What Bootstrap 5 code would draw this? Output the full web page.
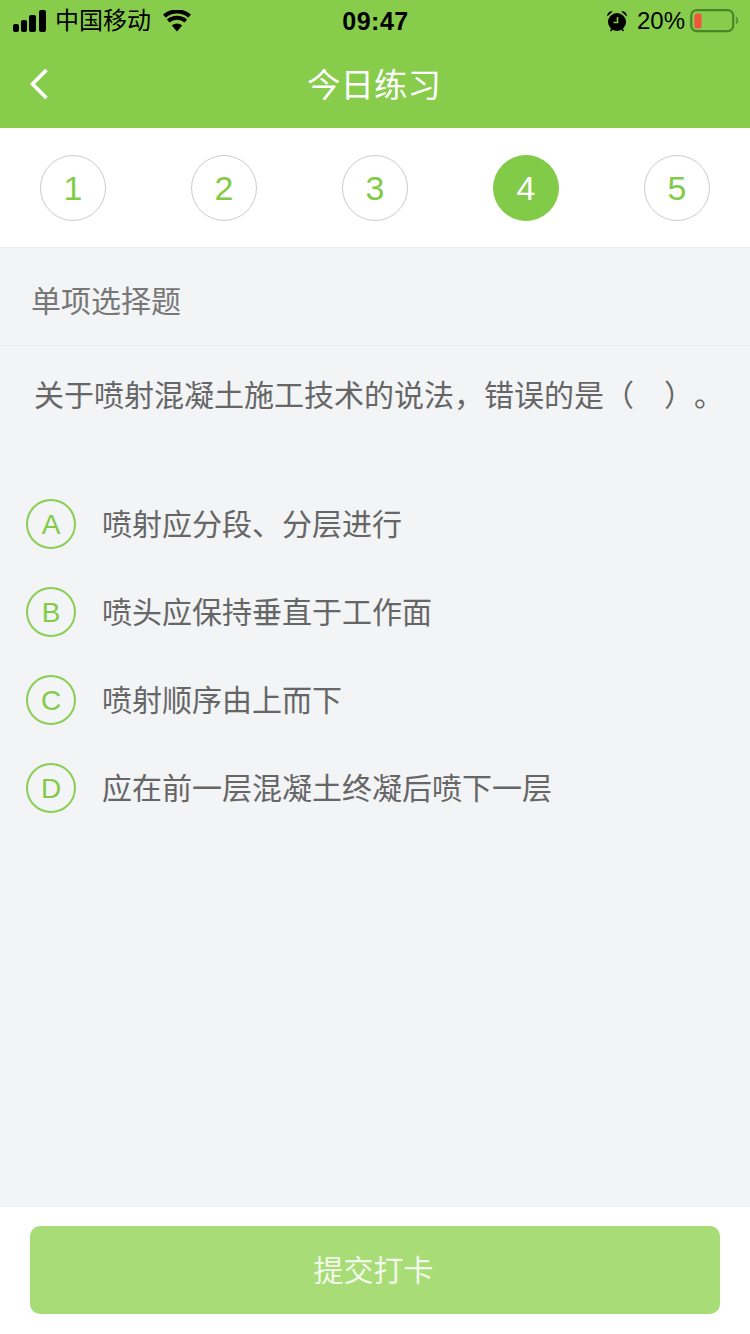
<!DOCTYPE html>
<html lang="zh">
<head>
    <meta charset="UTF-8">
    <title>今日练习</title>
    <meta name="viewport" content="width=device-width, initial-scale=1">
    <link href="https://cdn.jsdelivr.net/npm/bootstrap@5.3.0/dist/css/bootstrap.min.css" rel="stylesheet">
    <style>
        html, body { height: 100%; }
        body {
            width: 750px;
            height: 1334px;
            overflow: hidden;
            background: #f2f4f6;
            font-family: "Liberation Sans", "Noto Sans CJK SC", sans-serif;
            text-spacing-trim: space-all;
        }
        .screen { height: 1334px; }
        .app-head { background: #87cd4b; height: 128px; }
        .status-row { height: 42px; padding: 0 12px 0 13px; color: #000; font-size: 24px; line-height: 42px; }
        .status-left, .status-right { width: 300px; }
        .status-time { font-size: 25px; font-weight: 700; letter-spacing: .5px; }
        .carrier { margin-left: 9px; margin-right: 11px; }
        .pct { margin-left: 10px; margin-right: 5px; }
        .title-row { height: 86px; }
        .head-title { color: #fff; font-size: 33.500px; line-height: 87px; padding-right: 2px; }
        .back-btn { left: 29px; top: 68px; }
        .steps { background: #fff; height: 120px; padding: 27px 40px 0; border-bottom: 1px solid #e9ebed; }
        .step-dot {
            width: 66px; height: 66px;
            border: 1px solid #c9cccf;
            color: #82cb48;
            font-size: 34px;
        }
        .step-dot.on { background: #82cb48; border-color: #82cb48; color: #fff; }
        .q-type { height: 98px; padding-left: 31px; color: #777; font-size: 30px; line-height: 108px; border-bottom: 1px solid #e9ebed; }
        .q-text { padding: 29px 0 0 34px; height: 120px; color: #666; font-size: 30px; line-height: 42px; white-space: nowrap; }
        .opt-list { padding-left: 26px; gap: 38px; margin-top: 33px; }
        .opt-row { height: 50px; color: #666; font-size: 30px; }
        .opt-mark {
            width: 50px; height: 50px;
            padding-top: 2px;
            border: 2px solid #8ace55;
            color: #82cb48;
            font-size: 28px;
            margin-right: 26px;
        }
        .foot-bar { height: 128px; background: #fff; border-top: 1px solid #e9ebed; padding: 19px 30px 0; }
        .submit-btn {
            width: 690px; height: 88px;
            padding-right: 15px;
            background: #a8dc76;
            border: 0;
            border-radius: 10px;
            color: #f2f8ea;
            font-size: 30px;
        }
    </style>
</head>
<body>
    <div class="screen d-flex flex-column">
        <div class="app-head position-relative flex-shrink-0">
            <div class="status-row d-flex justify-content-between align-items-center">
                <div class="status-left d-flex align-items-center">
                    <svg width="33" height="23" viewBox="0 0 33 23"><rect x="0" y="14" width="6" height="8" rx="2"/><rect x="8" y="10" width="6" height="12" rx="2"/><rect x="16" y="5" width="7" height="17" rx="2"/><rect x="26" y="0" width="7" height="22" rx="2"/></svg>
                    <span class="carrier">中国移动</span>
                    <svg width="30" height="22" viewBox="0 0 30 22"><path d="M15 21.500l-5.200-6a7.600 7.600 0 0 1 10.400 0z"/><path d="M7.400 12.500a11.500 11.500 0 0 1 15.200 0l2.500-3a15.500 15.500 0 0 0-20.200 0z"/><path d="M3.800 8.300a17 17 0 0 1 22.400 0l2.800-3.300a21.500 21.500 0 0 0-28 0z" transform="translate(0 -.500)"/></svg>
                </div>
                <div class="status-time">09:47</div>
                <div class="status-right d-flex align-items-center justify-content-end">
                    <svg width="20" height="21" viewBox="1 1 20 21"><circle cx="11" cy="12" r="9"/><path d="M1.200 6.500a4.500 4.500 0 0 1 5.500-5zM20.800 6.500a4.500 4.500 0 0 0-5.500-5z"/><path d="M4.500 21l2-2.500M17.500 21l-2-2.500" stroke="#000" stroke-width="1.500"/><path d="M11.500 7v5.500H7.500" fill="none" stroke="#87cd4b" stroke-width="1.600"/></svg>
                    <span class="pct">20%</span>
                    <svg width="48" height="24" viewBox="0 0 48 24"><rect x="1.200" y="1.200" width="42" height="21" rx="5.500" fill="none" stroke="#4a8529" stroke-width="2.200"/><rect x="4.500" y="4.500" width="7" height="15" rx="2.500" fill="#f5533d"/><path d="M46 8.500a4 4 0 0 1 0 6" fill="none" stroke="#4a8529" stroke-width="1.500"/></svg>
                </div>
            </div>
            <div class="title-row text-center">
                <div class="head-title">今日练习</div>
            </div>
            <svg class="back-btn position-absolute" width="20" height="32" viewBox="0 0 20 32"><path d="M17.500 2L3.500 16l14 14" fill="none" stroke="#fff" stroke-width="3.600"/></svg>
        </div>

        <div class="steps d-flex justify-content-between flex-shrink-0">
            <div class="step-dot rounded-circle d-flex align-items-center justify-content-center">1</div>
            <div class="step-dot rounded-circle d-flex align-items-center justify-content-center">2</div>
            <div class="step-dot rounded-circle d-flex align-items-center justify-content-center">3</div>
            <div class="step-dot on rounded-circle d-flex align-items-center justify-content-center">4</div>
            <div class="step-dot rounded-circle d-flex align-items-center justify-content-center">5</div>
        </div>

        <div class="q-type flex-shrink-0">单项选择题</div>
        <div class="q-text flex-shrink-0">关于喷射混凝土施工技术的说法，错误的是（　）。</div>

        <div class="opt-list d-flex flex-column flex-grow-1">
            <div class="opt-row d-flex align-items-center"><span class="opt-mark rounded-circle d-flex align-items-center justify-content-center">A</span>喷射应分段、分层进行</div>
            <div class="opt-row d-flex align-items-center"><span class="opt-mark rounded-circle d-flex align-items-center justify-content-center">B</span>喷头应保持垂直于工作面</div>
            <div class="opt-row d-flex align-items-center"><span class="opt-mark rounded-circle d-flex align-items-center justify-content-center">C</span>喷射顺序由上而下</div>
            <div class="opt-row d-flex align-items-center"><span class="opt-mark rounded-circle d-flex align-items-center justify-content-center">D</span>应在前一层混凝土终凝后喷下一层</div>
        </div>

        <div class="foot-bar flex-shrink-0">
            <button type="button" class="btn submit-btn">提交打卡</button>
        </div>
    </div>
    <script src="https://cdn.jsdelivr.net/npm/bootstrap@5.3.0/dist/js/bootstrap.bundle.min.js"></script>
</body>
</html>
